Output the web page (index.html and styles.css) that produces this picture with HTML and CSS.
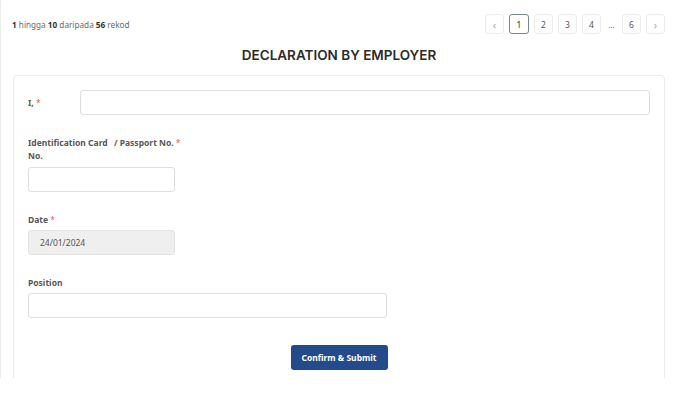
FILE: index.html
```html
<!DOCTYPE html>
<html>
<head>
<meta charset="utf-8">
<link rel="stylesheet" href="styles.css">
</head>
<body>
<div class="page">
  <div class="top">
    <div class="count"><b>1</b> hingga <b>10</b> daripada <b>56</b> rekod</div>
    <div class="pager">
      <span class="pg pg-nav">&#8249;</span>
      <span class="pg active">1</span>
      <span class="pg">2</span>
      <span class="pg">3</span>
      <span class="pg">4</span>
      <span class="pg-dots">…</span>
      <span class="pg">6</span>
      <span class="pg pg-nav">&#8250;</span>
    </div>
  </div>
  <h1 class="title">DECLARATION BY EMPLOYER</h1>
  <div class="card">
    <div class="row-inline">
      <label class="lbl lbl-inline">I, <span class="req">*</span></label>
      <div class="input input-full"></div>
    </div>
    <div class="field">
      <label class="lbl lbl-split"><span class="lbl-a">Identification Card No.</span><span class="lbl-b">/ Passport No. <span class="req">*</span></span></label>
      <div class="input input-sm"></div>
    </div>
    <div class="field">
      <label class="lbl">Date <span class="req">*</span></label>
      <div class="input input-sm input-disabled">24/01/2024</div>
    </div>
    <div class="field">
      <label class="lbl">Position</label>
      <div class="input input-md"></div>
    </div>
    <div class="actions">
      <button class="btn">Confirm &amp; Submit</button>
    </div>
  </div>
</div>
</body>
</html>
```
FILE: styles.css
```css
html, body {
  margin: 0;
  padding: 0;
  background: #fff;
}
body {
  font-family: "Noto Sans", "Open Sans", sans-serif;
  color: #555;
}
.page {
  height: 378px;
  overflow: hidden;
  border-left: 1px solid #ececec;
  padding: 0 11px 0 12px;
}
.top {
  display: flex;
  justify-content: space-between;
  align-items: center;
  padding-top: 14px;
}
.count {
  font-size: 8.2px;
  color: #6b6b6b;
  margin-left: -1px;
}
.count b {
  color: #333;
  font-weight: 700;
}
.pager {
  display: flex;
  align-items: center;
  gap: 5px;
}
.pg {
  box-sizing: border-box;
  width: 19px;
  height: 20px;
  border: 1px solid #ececec;
  border-radius: 3px;
  display: flex;
  align-items: center;
  justify-content: center;
  font-size: 8.5px;
  color: #555;
}
.pg-nav {
  color: #aaa;
  font-size: 11px;
}
.pg.active {
  width: 20px;
  border-color: #7a8394;
  color: #333;
}
.pg-dots {
  width: 11px;
  text-align: center;
  font-size: 8px;
  color: #666;
}
.title {
  margin: 11px 0 10px 0;
  text-align: center;
  font-family: Inter, "Noto Sans", sans-serif;
  font-size: 13.5px;
  line-height: 20px;
  font-weight: 600;
  color: #2b2b2b;
}
.card {
  border: 1px solid #ececec;
  border-radius: 4px;
  padding: 14px 14px 40px 14px;
}
.row-inline {
  display: flex;
  align-items: center;
}
.lbl {
  display: block;
  font-size: 8.5px;
  line-height: 13px;
  font-weight: 700;
  color: #585858;
}
.lbl-inline {
  width: 52px;
  flex: none;
}
.req {
  color: #e05a5a;
  font-weight: 400;
}
.lbl-split {
  display: flex;
  align-items: flex-start;
}
.lbl-a {
  width: 86px;
}
.input {
  box-sizing: border-box;
  height: 25px;
  border: 1px solid #dedede;
  border-radius: 3px;
  background: #fff;
  font-size: 8.5px;
  color: #555;
  padding-left: 11px;
  display: flex;
  align-items: center;
}
.input-full {
  flex: 1;
}
.field {
  margin-top: 21px;
}
.field .lbl {
  margin-bottom: 4px;
}
.field .lbl-split {
  margin-bottom: 5px;
}
.input-sm {
  width: 147px;
}
.input-md {
  width: 359px;
}
.input-disabled {
  background: #efefef;
  border-color: #e3e3e3;
}
.actions {
  display: flex;
  justify-content: center;
  margin-top: 27px;
}
.btn {
  box-sizing: border-box;
  height: 25px;
  width: 97px;
  border: none;
  border-radius: 3px;
  background: #234a8b;
  color: #fff;
  font-family: "Noto Sans", sans-serif;
  font-weight: 700;
  font-size: 8.5px;
  padding: 0;
}
```
